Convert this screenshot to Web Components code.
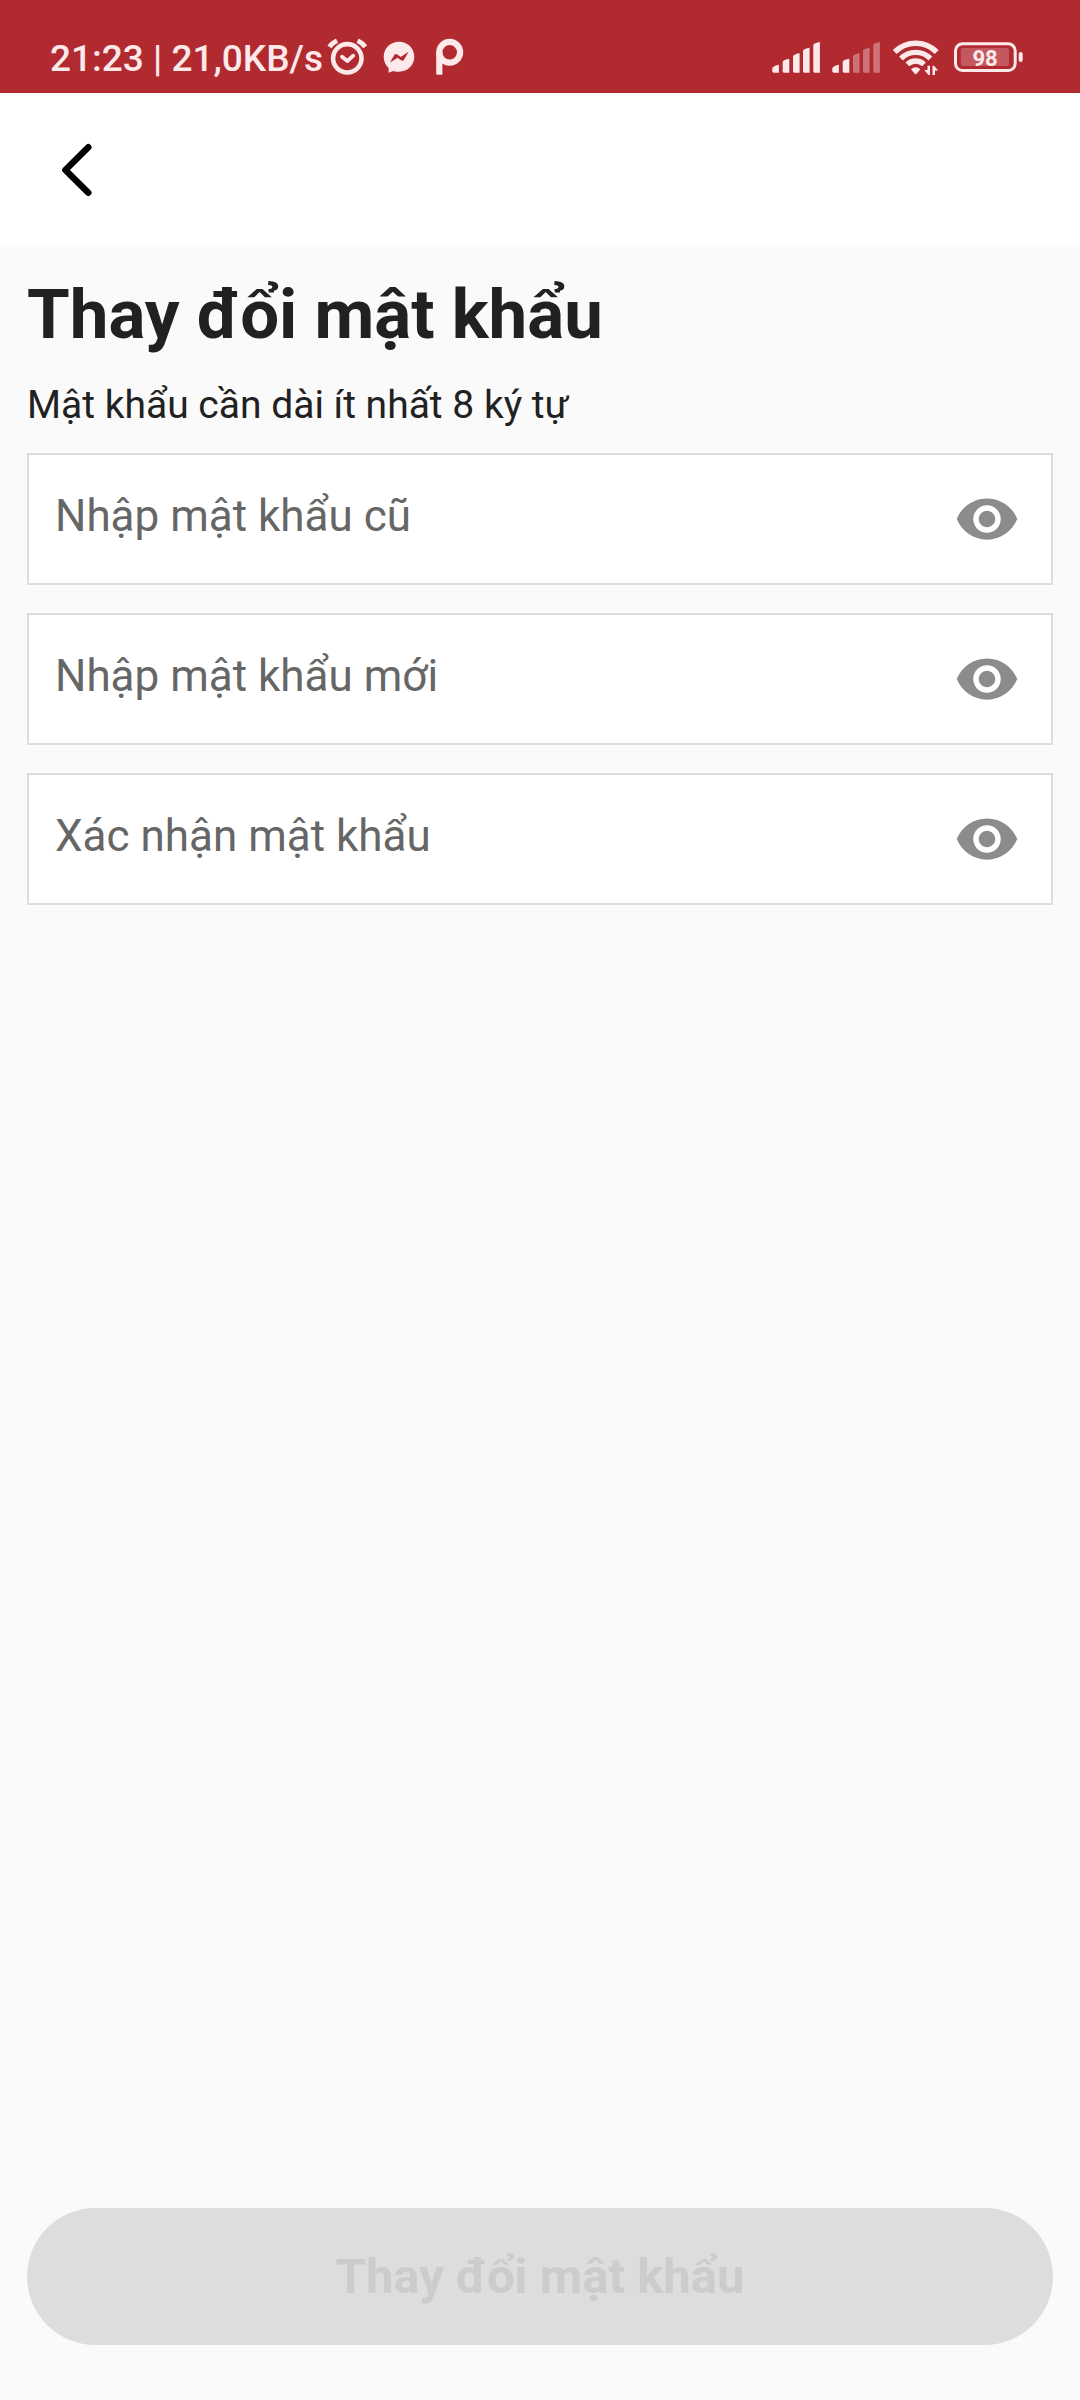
<!DOCTYPE html>
<html lang="vi">
<head>
<meta charset="utf-8">
<meta name="viewport" content="width=device-width, initial-scale=1">
<title>Thay đổi mật khẩu</title>
<style>
  body { margin: 0; background: #fafafa; color: #212121; font-family: Roboto, "Noto Sans", sans-serif; }
</style>
</head>
<body>
<change-password-page></change-password-page>

<template id="status-bar">
  <style>
    :host { display: flex; justify-content: space-between; align-items: flex-start; padding: 37px 56px 12px 50px; background: #b02a30; color: #fde8ea; font-size: 37px; line-height: 44px; font-weight: 500; }
    div { display: flex; align-items: flex-start; gap: 12px; }
    .clock { margin-right: -8px; white-space: nowrap; }
    svg { display: block; height: 40px; fill: currentColor; }
    .line { fill: none; stroke: currentColor; stroke-linecap: round; stroke-linejoin: round; }
    .flat { stroke-linecap: butt; }
    .dim { opacity: .38; }
    text { font-size: 22px; font-weight: 700; text-anchor: middle; }
  </style>
  <div>
    <span class="clock">21:23 | 21,0KB/s</span>
    <svg width="41" viewBox="0 0 41 40" aria-hidden="true">
      <circle class="line" cx="20.3" cy="21.3" r="14.2" stroke-width="4.6"/>
      <path class="line flat" stroke-width="4.8" d="M2.4 9.8Q5 6 10 3.6M38.2 9.8Q35.600 6 30.600 3.6"/>
      <path class="line" stroke-width="3.8" d="M15 19.800L20.300 24L26.300 18.700"/>
    </svg>
    <svg width="38" viewBox="0 0 38 40" aria-hidden="true">
      <path fill-rule="evenodd" d="M19 4.800C10.300 4.800 3.700 11.300 3.700 19.800C3.700 24.300 5.500 28.200 8.600 31V35.700L13.300 33.900C15 34.500 17 34.700 19 34.700C27.700 34.700 34.300 28.200 34.300 19.800C34.300 11.300 27.700 4.800 19 4.800ZM10 25.500L14.300 18.100Q15.600 16.300 17.400 17.600L20.700 20L28.600 14.800L24 22.800Q22.800 24.500 21 23.300L17.600 20.800Z"/>
    </svg>
    <svg width="38" viewBox="0 0 38 40" aria-hidden="true">
      <circle class="line" cx="19.700" cy="15.300" r="10.400" stroke-width="6.200"/>
      <path d="M6.200 15.300H12.400V37.700H7.200Q6.200 37.700 6.200 36.700Z"/>
    </svg>
  </div>
  <div>
    <svg width="48" viewBox="0 0 48 40" aria-hidden="true">
      <path d="M.3 31Q2 28.500 6.900 27.700V35.700H1.300L.3 34.700ZM10.700 24.500Q12.500 22.300 17.300 21.700V35.700H11.700L10.700 34.700ZM21 19Q22.800 16.800 27.600 16.300V35.700H22L21 34.700ZM31 13.500Q32.800 11.300 37.600 10.700V35.700H32L31 34.700ZM41.300 7.800Q43.100 5.600 47.900 5V35.700H42.300L41.300 34.700Z"/>
    </svg>
    <svg width="48" viewBox="0 0 48 40" aria-hidden="true">
      <path d="M.3 31Q2 28.500 6.900 27.700V35.700H1.300L.3 34.700ZM10.700 24.500Q12.500 22.300 17.300 21.700V35.700H11.700L10.700 34.700Z"/>
      <path class="dim" d="M21 19Q22.800 16.800 27.600 16.300V35.700H22L21 34.700ZM31 13.500Q32.800 11.300 37.600 10.700V35.700H32L31 34.700ZM41.300 7.800Q43.100 5.600 47.900 5V35.700H42.300L41.300 34.700Z"/>
    </svg>
    <svg width="48" viewBox="0 0 48 40" aria-hidden="true">
      <path class="line flat" stroke-width="5.400" d="M2.700 15A29.500 29.500 0 0 1 44.700 15M9 21.500A20.600 20.600 0 0 1 38.400 21.500M15.400 27.400A12 12 0 0 1 32 27.400"/>
      <path d="M19 32.200Q23.700 28.200 28.400 32.200L24.900 36.600Q23.700 37.700 22.500 36.600Z"/>
      <path d="M35.500 28.700H38V38H36.500L32.200 32.900H35.500ZM40.500 38V28.700H42L46.200 33.500H43V38Z"/>
    </svg>
    <svg width="72" viewBox="0 0 72 40" role="img" aria-label="Pin 98%">
      <rect class="line" x="3.500" y="6.800" width="59.700" height="26.700" rx="7" stroke-width="3"/>
      <rect x="8.700" y="11" width="48.300" height="18" rx="2" opacity=".25"/>
      <rect x="66.700" y="15" width="4" height="10" rx="2"/>
      <text x="33" y="29">98</text>
    </svg>
  </div>
</template>

<template id="nav-bar">
  <style>
    :host { display: flex; padding: 44px; background: #fff; }
    button { padding: 0; border: 0; background: none; color: #000; cursor: pointer; }
    svg { display: block; }
  </style>
  <button type="button" aria-label="Quay lại">
    <svg width="66" height="66" viewBox="0 0 66 66" fill="none" stroke="currentColor" stroke-width="6.500" stroke-linecap="round" stroke-linejoin="round"><path d="M44.300 10.200L21.400 33L44.300 55.800"/></svg>
  </button>
</template>

<template id="password-field">
  <style>
    :host { display: block; }
    .box { display: flex; align-items: center; height: 128px; padding: 0 31px 0 26px; border: 2px solid #ddd; background: #fff; }
    input { flex: 1; min-width: 0; align-self: stretch; padding: 0 0 6px; border: 0; outline: 0; background: none; color: #212121; font: inherit; font-size: 44px; }
    input::placeholder { color: #666; opacity: 1; }
    button { padding: 0; border: 0; background: none; color: #8c8c8c; cursor: pointer; }
    svg { display: block; }
  </style>
  <div class="box">
    <input type="password">
    <button type="button" aria-label="Hiện mật khẩu">
      <svg width="66" height="66" viewBox="0 0 24 24" fill="currentColor"><path d="M12 4.500C7 4.500 2.730 7.610 1 12c1.730 4.390 6 7.500 11 7.500s9.270-3.110 11-7.500c-1.730-4.390-6-7.500-11-7.500zM12 17c-2.760 0-5-2.240-5-5s2.240-5 5-5 5 2.240 5 5-2.240 5-5 5zm0-8c-1.660 0-3 1.340-3 3s1.340 3 3 3 3-1.340 3-3-1.340-3-3-3z"/></svg>
    </button>
  </div>
</template>

<template id="submit-button">
  <style>
    :host { display: block; }
    button { display: block; width: 100%; height: 137px; padding: 0 28px; border: 0; border-radius: 69px; background: #ddd; color: #ccc; font: inherit; font-size: 49px; font-weight: 700; }
  </style>
  <button type="submit" disabled><slot></slot></button>
</template>

<template id="change-password-page">
  <style>
    :host { display: flex; flex-direction: column; min-height: 100vh; }
    main { flex: 1; display: flex; flex-direction: column; padding: 28px 27px 55px; }
    h1 { margin: 0 0 28px; font-size: 69px; line-height: 80px; font-weight: 700; }
    p { margin: 0 0 26px; font-size: 39px; line-height: 44px; }
    form { flex: 1; display: flex; flex-direction: column; gap: 28px; }
    submit-button { margin-top: auto; }
  </style>
  <status-bar></status-bar>
  <nav-bar></nav-bar>
  <main>
    <h1>Thay đổi mật khẩu</h1>
    <p>Mật khẩu cần dài ít nhất 8 ký tự</p>
    <form>
      <password-field label="Nhập mật khẩu cũ"></password-field>
      <password-field label="Nhập mật khẩu mới"></password-field>
      <password-field label="Xác nhận mật khẩu"></password-field>
      <submit-button>Thay đổi mật khẩu</submit-button>
    </form>
  </main>
</template>

<script>
  class TemplateElement extends HTMLElement {
    constructor() {
      super();
      const template = document.getElementById(this.localName);
      this.attachShadow({ mode: "open" }).append(template.content.cloneNode(true));
    }
  }

  class PasswordField extends TemplateElement {
    connectedCallback() {
      const input = this.shadowRoot.querySelector("input");
      const toggle = this.shadowRoot.querySelector("button");
      input.placeholder = this.getAttribute("label");
      input.setAttribute("aria-label", input.placeholder);
      toggle.onclick = () => {
        input.type = input.type === "password" ? "text" : "password";
      };
    }
  }

  customElements.define("status-bar", class extends TemplateElement {});
  customElements.define("nav-bar", class extends TemplateElement {});
  customElements.define("password-field", PasswordField);
  customElements.define("submit-button", class extends TemplateElement {});
  customElements.define("change-password-page", class extends TemplateElement {});
</script>
</body>
</html>
